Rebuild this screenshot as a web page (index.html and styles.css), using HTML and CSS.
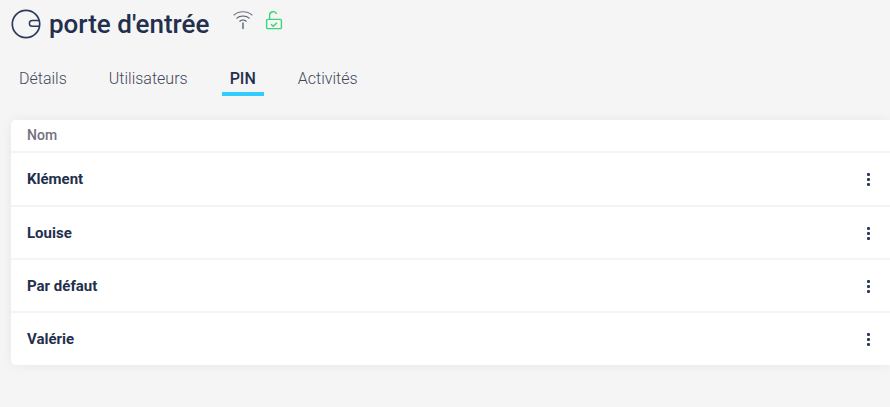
FILE: index.html
```html
<!DOCTYPE html>
<html lang="fr">
<head>
<meta charset="utf-8">
<title>porte d'entrée</title>
<link rel="stylesheet" href="styles.css">
</head>
<body>
<header class="head">
  <svg class="lock-icon" width="30" height="30" viewBox="0 0 30 30" fill="none" stroke="#2b3a5e" stroke-width="1.7">
    <circle cx="15" cy="15" r="13.7"/>
    <path d="M28.4 11.6H21.2a2.8 2.8 0 0 0 0 5.6H28.4" stroke-width="1.5"/>
  </svg>
  <h1 class="title">porte d'entrée</h1>
  <svg class="wifi" width="20" height="20" viewBox="0 0 20 20" fill="none" stroke="#4a566f" stroke-width="1.1" stroke-linecap="round">
    <path d="M1 5C6 0.6 14 0.6 19 5" stroke="#6b7487"/>
    <path d="M3.8 8.2C7.2 5.2 12.8 5.2 16.2 8.2"/>
    <path d="M6.8 11.2C8.6 9.8 11.4 9.8 13.2 11.2"/>
    <path d="M10 13V18.5" stroke-width="1.6" stroke="#6b7487"/>
  </svg>
  <svg class="open" width="18" height="20" viewBox="0 0 18 20" fill="none" stroke="#38d678" stroke-width="1.4">
    <rect x="1.6" y="8.4" width="14.8" height="9.2" rx="1.2"/>
    <path d="M4.6 8.2V4.4a3.6 3.6 0 0 1 7-1.3"/>
    <path d="M6 13.2l2.2 2.1 3.8-3.6" stroke-width="1.4"/>
  </svg>
</header>
<nav class="tabs">
  <a class="tab">Détails</a>
  <a class="tab">Utilisateurs</a>
  <a class="tab active">PIN</a>
  <a class="tab">Activités</a>
</nav>
<section class="card">
  <div class="row-head">Nom</div>
  <div class="row"><span>Klément</span><span class="menu"><i></i><i></i><i></i></span></div>
  <div class="row"><span>Louise</span><span class="menu"><i></i><i></i><i></i></span></div>
  <div class="row"><span>Par défaut</span><span class="menu"><i></i><i></i><i></i></span></div>
  <div class="row"><span>Valérie</span><span class="menu"><i></i><i></i><i></i></span></div>
</section>
</body>
</html>
```
FILE: styles.css
```css
* { box-sizing: border-box; }
html, body { margin: 0; height: 100%; overflow: hidden; }
body {
  background: #f5f5f5;
  font-family: Roboto, "Liberation Sans", sans-serif;
  color: #232f4d;
  padding-left: 11px;
}
.head {
  display: flex;
  align-items: flex-start;
  height: 58px;
  padding-top: 9px;
}
.lock-icon { flex: none; }
.title {
  margin: 0 0 0 8px;
  font-size: 26px;
  font-weight: 500;
  line-height: 30px;
  color: #232f4d;
}
.wifi { margin: 1px 0 0 24px; }
.open { margin: 2px 0 0 12px; }
.tabs {
  display: flex;
  gap: 26px;
  height: 62px;
}
.tab {
  height: 38px;
  padding: 11px 8px 0;
  font-size: 16px;
  line-height: 19px;
  font-weight: 300;
  color: #3f485d;
}
.tab.active {
  color: #232f4d;
  font-weight: 500;
  border-bottom: 4px solid #33ccff;
}
.card {
  background: #fff;
  border-radius: 5px 0 0 5px;
  box-shadow: 0 0 12px rgba(0, 0, 0, 0.06);
  height: 245px;
}
.row-head {
  height: 33px;
  padding: 7px 16px 0;
  font-size: 14px;
  line-height: 16px;
  font-weight: 500;
  color: #74707c;
  border-bottom: 2px solid #f4f4f8;
}
.row {
  display: flex;
  justify-content: space-between;
  align-items: center;
  height: 53px;
  padding: 1px 16px 0;
  font-size: 15px;
  font-weight: 700;
  border-bottom: 2px solid #f4f4f8;
}
.row-head + .row { height: 54px; padding-top: 0; }
.row:last-child { height: 52px; padding-top: 0; border-bottom: 0; }
.menu {
  display: flex;
  flex-direction: column;
  gap: 2px;
  margin-right: 4px;
}
.menu i {
  display: block;
  width: 3px;
  height: 3px;
  border-radius: 1px;
  background: #2b3a5e;
}
```
